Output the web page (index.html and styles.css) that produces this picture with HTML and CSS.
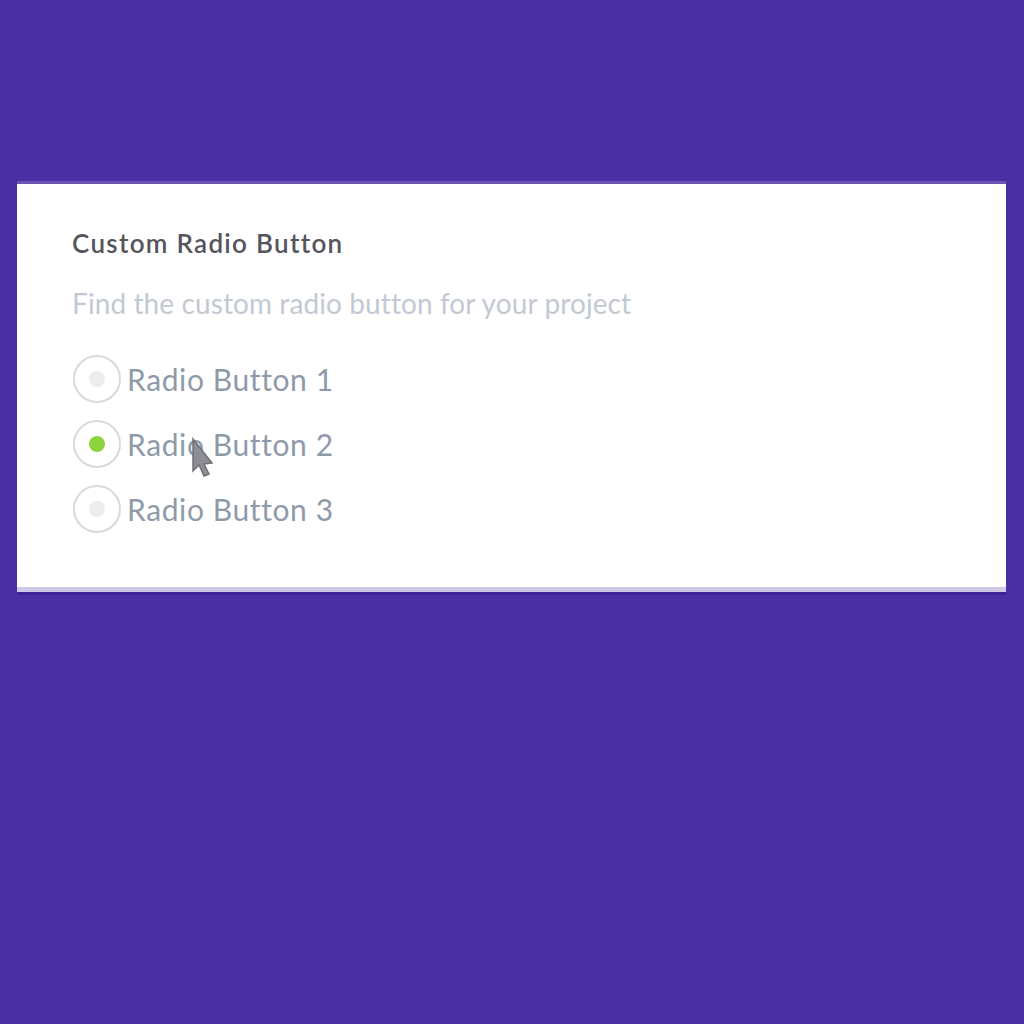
FILE: index.html
```html
<!DOCTYPE html>
<html>
<head>
<meta charset="utf-8">
<link rel="stylesheet" href="styles.css">
</head>
<body>
<div class="card">
  <h1 class="title">Custom Radio Button</h1>
  <p class="subtitle">Find the custom radio button for your project</p>
  <div class="options">
    <label class="option"><span class="radio"></span><span class="label">Radio Button 1</span></label>
    <label class="option"><span class="radio checked"></span><span class="label">Radio Button 2</span>
      <svg class="cursor" width="24" height="40" viewBox="0 0 24 40"><path d="M3 2 L3 34 L9 28 L14 39 L19 37 L14 27 L22 26 Z" fill="#8d8d95" stroke="#707078" stroke-width="1.5"/></svg>
    </label>
    <label class="option"><span class="radio"></span><span class="label">Radio Button 3</span></label>
  </div>
</div>
</body>
</html>
```
FILE: styles.css
```css
html, body {
  margin: 0;
  padding: 0;
  background: #4a2fa3;
  height: 1024px;
  font-family: "Lato", "Open Sans", sans-serif;
}
body {
  padding-top: 184px;
  box-sizing: border-box;
}
.card {
  margin-left: 17px;
  width: 989px;
  height: 408px;
  background: #fff;
  box-sizing: border-box;
  padding: 43px 0 0 55px;
  box-shadow: 0 -3px 0 #6a55b5, 0 3px 0 #3d2496, inset 0 -5px 0 #cfc8e6;
}
.title {
  margin: 0;
  font-size: 26px;
  font-weight: 600;
  color: #55555c;
  letter-spacing: 1.3px;
  line-height: 32px;
}
.subtitle {
  margin: 26px 0 0;
  font-size: 28px;
  color: #c3c9d3;
  letter-spacing: 0.1px;
  line-height: 36px;
}
.options {
  margin-top: 34px;
  display: flex;
  flex-direction: column;
  gap: 17px;
}
.option {
  display: flex;
  align-items: center;
  gap: 6px;
  position: relative;
  height: 48px;
}
.radio {
  width: 44px;
  height: 44px;
  border: 2px solid #d9d9dc;
  border-radius: 50%;
  display: flex;
  align-items: center;
  justify-content: center;
  margin-left: 1px;
  flex-shrink: 0;
}
.radio::after {
  content: "";
  width: 16px;
  height: 16px;
  border-radius: 50%;
  background: #ededee;
}
.radio.checked::after {
  background: #8bd43f;
}
.label {
  font-size: 30px;
  color: #8e9aa8;
  letter-spacing: 0.6px;
}
.cursor {
  position: absolute;
  left: 118px;
  top: 17px;
}
```
